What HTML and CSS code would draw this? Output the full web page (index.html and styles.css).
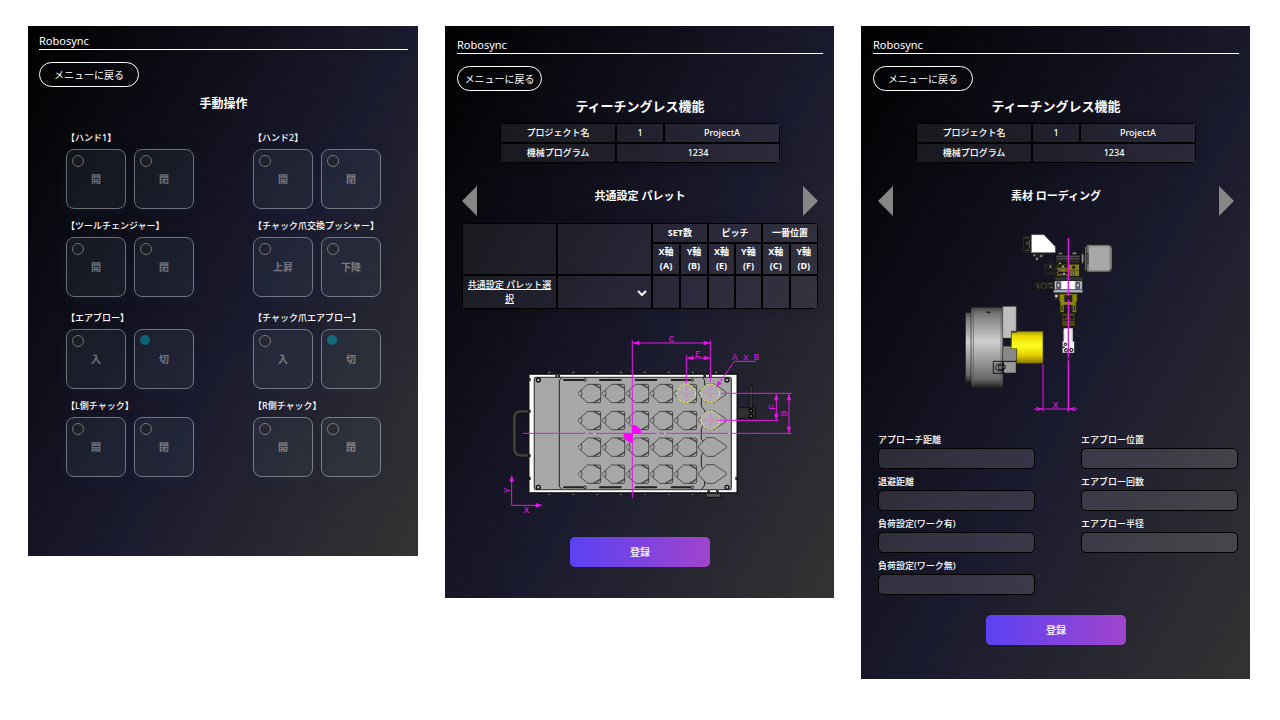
FILE: index.html
```
<!DOCTYPE html>
<html lang="ja">
<head>
    <meta charset="UTF-8">
    <meta name="viewport" content="width=device-width, initial-scale=1.0">
    <title>Robosync</title>
    <link rel="stylesheet" href="styles.css">
</head>
<body>
    <main class="screens">

        <!-- 手動操作 -->
        <section class="screen manual">
            <header class="brand">Robosync</header>
            <button type="button" class="back">メニューに戻る</button>
            <h1>手動操作</h1>

            <div class="groups">
                <div class="group">
                    <h2>【ハンド1】</h2>
                    <div class="pair">
                        <button type="button" class="op"><span class="lamp"></span>開</button>
                        <button type="button" class="op"><span class="lamp"></span>閉</button>
                    </div>
                </div>
                <div class="group">
                    <h2>【ハンド2】</h2>
                    <div class="pair">
                        <button type="button" class="op"><span class="lamp"></span>開</button>
                        <button type="button" class="op"><span class="lamp"></span>閉</button>
                    </div>
                </div>
                <div class="group">
                    <h2>【ツールチェンジャー】</h2>
                    <div class="pair">
                        <button type="button" class="op"><span class="lamp"></span>開</button>
                        <button type="button" class="op"><span class="lamp"></span>閉</button>
                    </div>
                </div>
                <div class="group">
                    <h2>【チャック爪交換プッシャー】</h2>
                    <div class="pair">
                        <button type="button" class="op"><span class="lamp"></span>上昇</button>
                        <button type="button" class="op"><span class="lamp"></span>下降</button>
                    </div>
                </div>
            </div>

            <div class="groups">
                <div class="group">
                    <h2>【エアブロー】</h2>
                    <div class="pair">
                        <button type="button" class="op"><span class="lamp"></span>入</button>
                        <button type="button" class="op"><span class="lamp on"></span>切</button>
                    </div>
                </div>
                <div class="group">
                    <h2>【チャック爪エアブロー】</h2>
                    <div class="pair">
                        <button type="button" class="op"><span class="lamp"></span>入</button>
                        <button type="button" class="op"><span class="lamp on"></span>切</button>
                    </div>
                </div>
                <div class="group">
                    <h2>【L側チャック】</h2>
                    <div class="pair">
                        <button type="button" class="op"><span class="lamp"></span>開</button>
                        <button type="button" class="op"><span class="lamp"></span>閉</button>
                    </div>
                </div>
                <div class="group">
                    <h2>【R側チャック】</h2>
                    <div class="pair">
                        <button type="button" class="op"><span class="lamp"></span>開</button>
                        <button type="button" class="op"><span class="lamp"></span>閉</button>
                    </div>
                </div>
            </div>
        </section>

        <!-- 共通設定 パレット -->
        <section class="screen pallet">
            <header class="brand">Robosync</header>
            <button type="button" class="back small">メニューに戻る</button>
            <h1>ティーチングレス機能</h1>

            <table class="project">
                <tr><td class="name">プロジェクト名</td><td class="no">1</td><td>ProjectA</td></tr>
                <tr><td>機械プログラム</td><td colspan="2">1234</td></tr>
            </table>

            <nav class="pager">
                <button type="button" class="arrow prev" aria-label="前へ"></button>
                <h2>共通設定 パレット</h2>
                <button type="button" class="arrow next" aria-label="次へ"></button>
            </nav>

            <table class="settings">
                <colgroup><col class="wide"><col class="wide"><col span="6"></colgroup>
                <tr class="top">
                    <th rowspan="2"></th><th rowspan="2"></th>
                    <th colspan="2">SET数</th><th colspan="2">ピッチ</th><th colspan="2">一番位置</th>
                </tr>
                <tr class="axis">
                    <th>X軸<br>(A)</th><th>Y軸<br>(B)</th>
                    <th>X軸<br>(E)</th><th>Y軸<br>(F)</th>
                    <th>X軸<br>(C)</th><th>Y軸<br>(D)</th>
                </tr>
                <tr class="values">
                    <td><a href="#">共通設定 パレット選択</a></td>
                    <td>
                        <div class="select">
                            <select aria-label="パレット"><option></option></select>
                            <svg width="10" height="6" viewBox="0 0 10 6"><path d="M1 1l4 4 4-4" fill="none" stroke="#fff" stroke-width="2"/></svg>
                        </div>
                    </td>
                    <td><input type="text" aria-label="A"></td>
                    <td><input type="text" aria-label="B"></td>
                    <td><input type="text" aria-label="E"></td>
                    <td><input type="text" aria-label="F"></td>
                    <td><input type="text" aria-label="C"></td>
                    <td><input type="text" aria-label="D"></td>
                </tr>
            </table>

            <svg class="figure" width="310" height="190" viewBox="-45 15 930 570">
                <defs>
                    <g id="pocket" fill="none" stroke="#1c1c1c" stroke-width="2">
                        <path d="M1 1Q-1 0 1-3L28-27H62Q67-27 67-22V23Q67 28 62 28H28L1 4"/>
                        <path d="M44-27l23 13M67 14L44 28M48-27l19 10M67 17L48 28M9-9q4 9 0 18"/>
                    </g>
                    <path id="slot" d="M0 0H62" stroke="#222" stroke-width="6" stroke-linecap="round"/>
                    <path id="tip" d="M0 0L20-7V7Z" fill="#e815e8"/>
                    <circle id="bolt" r="6" fill="#aaa" stroke="#111" stroke-width="4"/>
                </defs>

                <!-- handle and brackets -->
                <path d="M90 259H62Q43 259 43 280V370Q43 391 62 391H90" fill="none" stroke="#161616" stroke-width="17"/>
                <path d="M90 259H62Q43 259 43 280V370Q43 391 62 391H90" fill="none" stroke="#444" stroke-width="7"/>
                <path d="M712 248h54v32h-54z" fill="#303030" stroke="#111" stroke-width="3"/>
                <path d="M753 181v68" stroke="#111" stroke-width="10"/>
                <path d="M753 184v64" stroke="#555" stroke-width="3"/>
                <circle cx="753" cy="257" r="5" fill="#777" stroke="#000" stroke-width="4"/>
                <circle cx="753" cy="273" r="5" fill="#777" stroke="#000" stroke-width="4"/>
                <path d="M618 503h44v14h-44z" fill="#555" stroke="#111" stroke-width="3"/>
                <g fill="#777" stroke="#111" stroke-width="2">
                    <path d="M144 139h8v8h-8zM216 139h8v8h-8zM288 139h8v8h-8zM359 139h8v8h-8zM430 139h8v8h-8zM502 139h8v8h-8zM574 139h8v8h-8zM645 139h8v8h-8z"/>
                    <path d="M144 503h8v8h-8zM216 503h8v8h-8zM288 503h8v8h-8zM359 503h8v8h-8zM430 503h8v8h-8zM502 503h8v8h-8zM574 503h8v8h-8z"/>
                </g>

                <!-- tray -->
                <rect x="86" y="147" width="626" height="357" fill="#fff" stroke="#151515" stroke-width="5"/>
                <rect x="103" y="157" width="591" height="337" rx="5" fill="#a7a7a7" stroke="#4a4a4a" stroke-width="4"/>
                <path d="M186 158l-8 8v319l8 8M608 158l6 9v23l-10 13V244l10 12V298l-10 12V342l10 12v24l-10 14v32l10 14v42l-8 12" fill="none" stroke="#222" stroke-width="3"/>
                <path d="M87 254h5v9h-5zM87 388h5v9h-5zM87 455h5v10h-5zM706 455h5v10h-5zM87 159h5v10h-5zM166 150h6v7h-6zM174 150h6v7h-6zM610 150h8v7h-8zM627 150h8v7h-8zM622 496h8v7h-8zM648 496h8v7h-8z" fill="#222"/>
                <use href="#slot" x="192" y="165"/><use href="#slot" x="300" y="165"/><use href="#slot" x="407" y="165"/><use href="#slot" x="515" y="165"/>
                <use href="#slot" x="192" y="487"/><use href="#slot" x="300" y="487"/><use href="#slot" x="407" y="487"/><use href="#slot" x="515" y="487"/>
                <use href="#bolt" x="115" y="165"/><use href="#bolt" x="681" y="165"/><use href="#bolt" x="115" y="487"/><use href="#bolt" x="681" y="487"/>
                <circle cx="255" cy="165" r="4" fill="#999" stroke="#111" stroke-width="2"/><circle cx="577" cy="165" r="4" fill="#999" stroke="#111" stroke-width="2"/>
                <circle cx="255" cy="487" r="4" fill="#999" stroke="#111" stroke-width="2"/><circle cx="577" cy="487" r="4" fill="#999" stroke="#111" stroke-width="2"/>

                <g id="row">
                    <use href="#pocket" x="235" y="205"/><use href="#pocket" x="307" y="205"/><use href="#pocket" x="379" y="205"/><use href="#pocket" x="451" y="205"/><use href="#pocket" x="523" y="205"/>
                    <path d="M596 202L617 180Q619 177 624 177H642L677 200Q682 205 677 209L642 233H624Q619 233 616 230L596 208Q594 205 596 202Z" fill="#a7a7a7" stroke="#1c1c1c" stroke-width="2"/>
                </g>
                <use href="#row" y="81"/>
                <use href="#row" y="161"/>
                <use href="#row" y="242"/>

                <g fill="#b0aeb0" stroke="#f0ee70" stroke-width="3" stroke-dasharray="8 4">
                    <circle cx="559" cy="205" r="28"/><circle cx="631" cy="205" r="28"/><circle cx="631" cy="286" r="28"/>
                </g>

                <!-- dimension lines -->
                <g fill="none" stroke="#e815e8" stroke-width="3">
                    <path d="M397 46V519M69 325H875M400 54H629M631 46V170M559 90V174M562 99H628M829 208V283M867 208V322M665 205H875M654 286H836M767 109H703L652 182"/>
                    <path d="M35 453V541H125"/>
                    <path d="M559 183v47M536 205h46M631 183v47M608 205h46M631 264v44M608 286h46" stroke="#cb72b9" stroke-width="2" stroke-dasharray="16 5"/>
                </g>
                <path d="M258 325h7M280 325h7M470 325h7M492 325h7M684 325h6" stroke="#ccc" stroke-width="3"/>
                <use href="#tip" transform="translate(398 54)"/>
                <use href="#tip" transform="translate(631 54) rotate(180)"/>
                <use href="#tip" transform="translate(560 99)"/>
                <use href="#tip" transform="translate(631 99) rotate(180)"/>
                <use href="#tip" transform="translate(648 188) rotate(-55)"/>
                <use href="#tip" transform="translate(829 206) rotate(90)"/>
                <use href="#tip" transform="translate(829 286) rotate(-90)"/>
                <use href="#tip" transform="translate(867 206) rotate(90)"/>
                <use href="#tip" transform="translate(867 325) rotate(-90)"/>
                <use href="#tip" transform="translate(35 450) rotate(90)"/>
                <use href="#tip" transform="translate(127 541) rotate(180)"/>
                <circle cx="397" cy="326" r="27" fill="none" stroke="#d070c8" stroke-width="2"/>
                <path d="M397 326V299A27 27 0 0 1 424 326ZM397 326V353A27 27 0 0 1 370 326Z" fill="#f0f"/>
                <g class="dim">
                    <text x="514" y="50">C</text>
                    <text x="594" y="95">E</text>
                    <text x="737" y="105">A x B</text>
                    <text transform="translate(824 246) rotate(-90)">F</text>
                    <text transform="translate(862 266) rotate(-90)">D</text>
                    <text transform="translate(30 496) rotate(-90)">Y</text>
                    <text x="79" y="563">X</text>
                </g>
            </svg>

            <button type="submit" class="submit">登録</button>
        </section>

        <!-- 素材 ローディング -->
        <section class="screen loading">
            <header class="brand">Robosync</header>
            <button type="button" class="back">メニューに戻る</button>
            <h1>ティーチングレス機能</h1>

            <table class="project">
                <tr><td class="name">プロジェクト名</td><td class="no">1</td><td>ProjectA</td></tr>
                <tr><td>機械プログラム</td><td colspan="2">1234</td></tr>
            </table>

            <nav class="pager">
                <button type="button" class="arrow prev" aria-label="前へ"></button>
                <h2>素材 ローディング</h2>
                <button type="button" class="arrow next" aria-label="次へ"></button>
            </nav>

            <svg class="figure" width="200" height="190" viewBox="18 15 600 570">
                <defs>
                    <linearGradient id="steel" x1="0" y1="0" x2="0" y2="1">
                        <stop offset="0" stop-color="#444"/><stop offset=".08" stop-color="#777"/><stop offset=".42" stop-color="#cfcfcf"/><stop offset=".9" stop-color="#666"/><stop offset="1" stop-color="#222"/>
                    </linearGradient>
                    <linearGradient id="work" x1="0" y1="0" x2="0" y2="1">
                        <stop offset="0" stop-color="#a89a00"/><stop offset=".15" stop-color="#eadb00"/><stop offset=".45" stop-color="#ffff20"/><stop offset=".75" stop-color="#e5cf00"/><stop offset="1" stop-color="#8a7600"/>
                    </linearGradient>
                </defs>

                <!-- chuck -->
                <rect x="46" y="262" width="18" height="209" fill="url(#steel)" stroke="#222" stroke-width="2"/>
                <rect x="63" y="247" width="96" height="240" rx="8" fill="url(#steel)" stroke="#222" stroke-width="2"/>
                <path d="M70 250v234M153 250v234" stroke="#555" stroke-width="2"/>
                <path d="M158 244h41v75h-14v21h-27z" fill="#bdbdbd" stroke="#333" stroke-width="2"/>
                <path d="M158 340h28v23h-28z" fill="#161a25"/>
                <path d="M158 363h26l16 8v74h-42z" fill="#888" stroke="#222" stroke-width="2"/>
                <path d="M160 412h39v31h-39z" fill="#999"/>
                <path d="M130 409h29v36h-29zM160 409h39v36h-39z" fill="none" stroke="#111" stroke-width="3"/>
                <path d="M157 417h-12q-8 0-8 10t8 10h12M146 421h13v13h-13zM157 421h8v10h-8z" fill="#888" stroke="#111" stroke-width="3"/>
                <path d="M109 260h12v4h-12zM113 259h5v6h-5z" fill="#222"/>
                <path d="M200 319h79v96h-79v-44h-16v-49h16z" fill="url(#work)" stroke="#4f4600" stroke-width="2"/>

                <!-- robot hand -->
                <path d="M220 35h26v48h-26z" fill="#171717" stroke="#333" stroke-width="2"/>
                <circle cx="232" cy="55" r="9" fill="#333" stroke="#000" stroke-width="3"/><path d="M224 39h14M225 76h14M238 45v25" stroke="#555" stroke-width="3"/>
                <path d="M244 29h38l34 36v18h-72z" fill="#fff" stroke="#555" stroke-width="2"/>
                <path d="M251 88h30M255 96h22" stroke="#222" stroke-width="7"/><circle cx="261" cy="102" r="4" fill="#888"/><circle cx="274" cy="93" r="4" fill="#777"/><circle cx="253" cy="91" r="3" fill="#999"/>
                <path d="M393 88h18v25h-18z" fill="#555" stroke="#111" stroke-width="3"/>
                <path d="M397 85v31M402 92h11M402 108h11" stroke="#bbb" stroke-width="2"/>
                <path d="M413 58h68l7 7v70l-7 7h-68l-9-9V67z" fill="#777" stroke="#151515" stroke-width="3"/>
                <path d="M417 64h62v72h-62z" fill="#a8a8a8"/>
                <path d="M410 62v78M407 86h7v32M476 62h8v8M484 130v8h-8" fill="none" stroke="#303030" stroke-width="3"/>
                <path d="M317 88h74v29h-74z" fill="#282828" stroke="#111" stroke-width="3"/>
                <path d="M318 94h72M321 101h67" stroke="#666" stroke-width="2"/>
                <path d="M325 83h13v5h-13zM367 82h13v6h-13z" fill="#aaa" stroke="#111" stroke-width="2"/>
                <path d="M319 117h70v37h-70z" fill="#635f08" stroke="#151500" stroke-width="3"/>
                <path d="M358 119h29v15h-29zM320 130h26v12h-26zM361 139h26v13h-26z" fill="#85800f"/>
                <path d="M284 117h26l9 10v20h-35z" fill="#202020" stroke="#333" stroke-width="2"/>
                <path d="M288 124h27M287 137h37M323 112h25M322 124h33M324 143h34" stroke="#171717" stroke-width="6"/>
                <g fill="#aaa" stroke="#111" stroke-width="2"><circle cx="301" cy="125" r="4"/><circle cx="330" cy="115" r="4"/><circle cx="339" cy="125" r="5"/><circle cx="328" cy="135" r="4"/><circle cx="342" cy="147" r="5"/><circle cx="371" cy="127" r="4" fill="#222"/><circle cx="370" cy="145" r="4"/></g>
                <path d="M314 155h84v13h-84z" fill="#333" stroke="#161616" stroke-width="2"/>
                <path d="M250 168h62v27h-55v-7h-7z" fill="#202020" stroke="#111" stroke-width="3"/>
                <circle cx="281" cy="183" r="7" fill="#111" stroke="#555" stroke-width="2"/><path d="M264 178v12M295 176h12M299 187h10" stroke="#555" stroke-width="3"/>
                <path d="M313 168h84v26h-84z" fill="#bec4d4" stroke="#222" stroke-width="2"/>
                <path d="M335 168h39v25h-39z" fill="#fff"/><path d="M320 173h11v17h-11zM378 173h11v17h-11z" fill="#778" stroke="#222" stroke-width="2"/>
                <circle cx="325" cy="181" r="3" fill="#ddd"/><circle cx="384" cy="181" r="3" fill="#ddd"/>
                <path d="M311 194h87v9h-87z" fill="#aab4ca" stroke="#444" stroke-width="2"/>
                <path d="M313 206h14v17h-14z" fill="#333"/><circle cx="319" cy="213" r="4" fill="#ddd"/>
                <path d="M327 206h55v25h-3v32h-49v-32h-3z" fill="#8a850c" stroke="#252300" stroke-width="3"/>
                <path d="M343 210h24v21h-24zM341 240h27v24h-27z" fill="#222"/><path d="M336 241v16M373 241v16M345 239v23M351 239v23M361 239v23" stroke="#111" stroke-width="3"/>
                <path d="M335 264h41v41h-41z" fill="#4c480a" stroke="#16150a" stroke-width="3"/>
                <path d="M335 274h41M338 286h37" stroke="#222" stroke-width="4"/><circle cx="366" cy="279" r="4" fill="#111"/><circle cx="343" cy="278" r="3" fill="#111"/>
                <path d="M341 309h28v40h4v35h-36v-35h4z" fill="#fff" stroke="#333" stroke-width="2"/>
                <path d="M341 314v34M366 310v38" stroke="#aaa" stroke-width="2"/>
                <g fill="#bbb" stroke="#111" stroke-width="3"><circle cx="346" cy="358" r="4"/><circle cx="348" cy="376" r="5"/><circle cx="364" cy="375" r="5"/><circle cx="341" cy="367" r="2"/></g>

                <!-- dimension lines -->
                <path d="M355 39V560" stroke="#e815e8" stroke-width="4"/>
                <path d="M279 418V560M252 552H382" stroke="#e815e8" stroke-width="3"/>
                <path d="M355 213v12M355 398v8" stroke="#300030" stroke-width="4"/>
                <path d="M279 552l-22-7 7 7-7 7zM355 552l22-7-7 7 7 7z" fill="#e815e8"/>
                <text class="dim" x="316" y="548">X</text>
            </svg>

            <form class="params" id="params">
                <div class="column">
                    <label for="approach">アプローチ距離</label>
                    <input type="text" id="approach">
                    <label for="retreat">退避距離</label>
                    <input type="text" id="retreat">
                    <label for="load-on">負荷設定(ワーク有)</label>
                    <input type="text" id="load-on">
                    <label for="load-off">負荷設定(ワーク無)</label>
                    <input type="text" id="load-off">
                </div>
                <div class="column">
                    <label for="air-pos">エアブロー位置</label>
                    <input type="text" id="air-pos">
                    <label for="air-count">エアブロー回数</label>
                    <input type="text" id="air-count">
                    <label for="air-radius">エアブロー半径</label>
                    <input type="text" id="air-radius">
                </div>
            </form>
            <button type="submit" class="submit" form="params">登録</button>
        </section>

    </main>
</body>
</html>
```
FILE: styles.css
```
* {
    box-sizing: border-box;
}
body {
    margin: 0;
    background: #fff;
    color: #fff;
    font-family: "Noto Sans", "Noto Sans CJK JP", sans-serif;
    font-size: 9px;
}
button, input, select {
    font-family: inherit;
    color: inherit;
}
button {
    cursor: pointer;
}
h1, h2 {
    margin: 0;
}
.screens {
    display: grid;
    grid-template-columns: 390fr 389fr 389fr;
    align-items: start;
    gap: 27px;
    padding: 26px 30px 26px 28px;
}
.screen {
    display: flex;
    flex-direction: column;
    padding: 11px 11px 31px 12px;
    background: linear-gradient(120deg, #000 0%, #1a1a2e 55%, #333 100%);
}
.manual {
    padding: 7px 10px 65px 11px;
}
.loading {
    padding-bottom: 34px;
}
.brand {
    font-size: 11px;
    line-height: 16px;
    border-bottom: 1px solid #fff;
}
.back {
    align-self: flex-start;
    width: 100px;
    height: 25px;
    margin: 12px 0 6px;
    padding: 0;
    font-size: 10px;
    line-height: 14px;
    background: transparent;
    border: 1px solid #fff;
    border-radius: 13px;
}
.back.small {
    width: 85px;
}
h1 {
    font-size: 13px;
    line-height: 18px;
    text-align: center;
}

/* manual operation */
.manual h1 {
    font-size: 12px;
    line-height: 22px;
    margin-bottom: 16px;
}
.groups {
    display: grid;
    grid-template-columns: 128px 128px;
    justify-content: space-between;
    row-gap: 10px;
    margin: 0 27px 14px;
}
.group h2 {
    font-size: 9px;
    line-height: 14px;
    font-weight: 500;
    white-space: nowrap;
    margin-bottom: 4px;
}
.pair {
    display: flex;
    gap: 8px;
}
.op {
    position: relative;
    width: 60px;
    height: 60px;
    padding: 0 0 2px;
    font-size: 10px;
    font-weight: bold;
    color: #fff;
    background: rgba(75, 100, 110, 0.4);
    border: 1px solid #fff;
    border-radius: 8px;
    box-shadow: 0 3px 10px rgba(31, 60, 110, 0.4);
    opacity: 0.4;
}
.lamp {
    position: absolute;
    top: 5px;
    left: 5px;
    width: 12px;
    height: 12px;
    border: 1px solid #fff;
    border-radius: 50%;
    background: #333;
}
.lamp.on {
    width: 10px;
    height: 10px;
    border: 0;
    background: #00d5ee;
}

/* tables */
table {
    table-layout: fixed;
    border-spacing: 0;
    border-radius: 5px;
    overflow: hidden;
    box-shadow: 0 0 12px rgba(0, 0, 0, 0.2);
}
td, th {
    padding: 0;
    text-align: center;
    border: 1px solid #000;
    background: rgba(255, 255, 255, 0.07);
}
.project {
    width: 280px;
    margin: 8px auto 0;
    font-weight: 500;
}
.project td {
    height: 20px;
    line-height: 14px;
}
.project .name {
    width: 116px;
}
.project .no {
    width: 48px;
}
.pager {
    display: flex;
    justify-content: space-between;
    margin: 23px 5px 7px;
}
.pager h2 {
    font-size: 11px;
    line-height: 20px;
}
.arrow {
    width: 15px;
    height: 30px;
    padding: 0;
    border: 0;
    background: #868686;
}
.prev {
    clip-path: polygon(0 50%, 100% 0, 100% 100%);
}
.next {
    clip-path: polygon(0 0, 100% 50%, 0 100%);
}
.settings {
    width: auto;
    min-width: 356px;
    margin: 0 5px;
    line-height: 14px;
}
.settings .wide {
    width: 95px;
}
.settings .top {
    height: 20px;
}
.settings .axis {
    height: 32px;
}
.settings .values {
    height: 34px;
}
.settings a {
    display: block;
    padding: 0 4px;
    color: #fff;
    font-weight: 500;
}
.settings input {
    display: block;
    width: 100%;
    height: 28px;
    padding: 0;
    font-size: 9px;
    background: transparent;
    border: 0;
}
.select {
    position: relative;
}
.select select {
    display: block;
    width: 100%;
    height: 28px;
    font-size: 9px;
    appearance: none;
    background: transparent;
    border: 0;
}
.select svg {
    position: absolute;
    right: 4px;
    top: 12px;
    pointer-events: none;
}

/* figures */
.figure {
    align-self: center;
}
.pallet .figure {
    margin: 21px 0 17px;
}
.loading .figure {
    margin: 7px 0 13px;
}
.dim, .dim text {
    font-family: "Liberation Mono", monospace;
    font-size: 27px;
    text-anchor: middle;
    fill: #e815e8;
}

.submit {
    align-self: center;
    width: 140px;
    height: 30px;
    padding: 0;
    font-size: 10px;
    line-height: 14px;
    font-weight: 500;
    border: 0;
    border-radius: 5px;
    background: linear-gradient(to right, #5b42f3, #a044cc);
}
.params {
    display: grid;
    grid-template-columns: 157px 157px;
    justify-content: space-between;
    margin: 0 1px 14px 5px;
}
.column {
    display: flex;
    flex-direction: column;
}
.params label {
    line-height: 13px;
    font-weight: 500;
}
.params input {
    width: 100%;
    height: 21px;
    margin: 2px 0 6px;
    padding: 0 5px;
    font-size: 9px;
    background: rgba(255, 255, 255, 0.12);
    border: 1px solid #000;
    border-radius: 5px;
}
```
